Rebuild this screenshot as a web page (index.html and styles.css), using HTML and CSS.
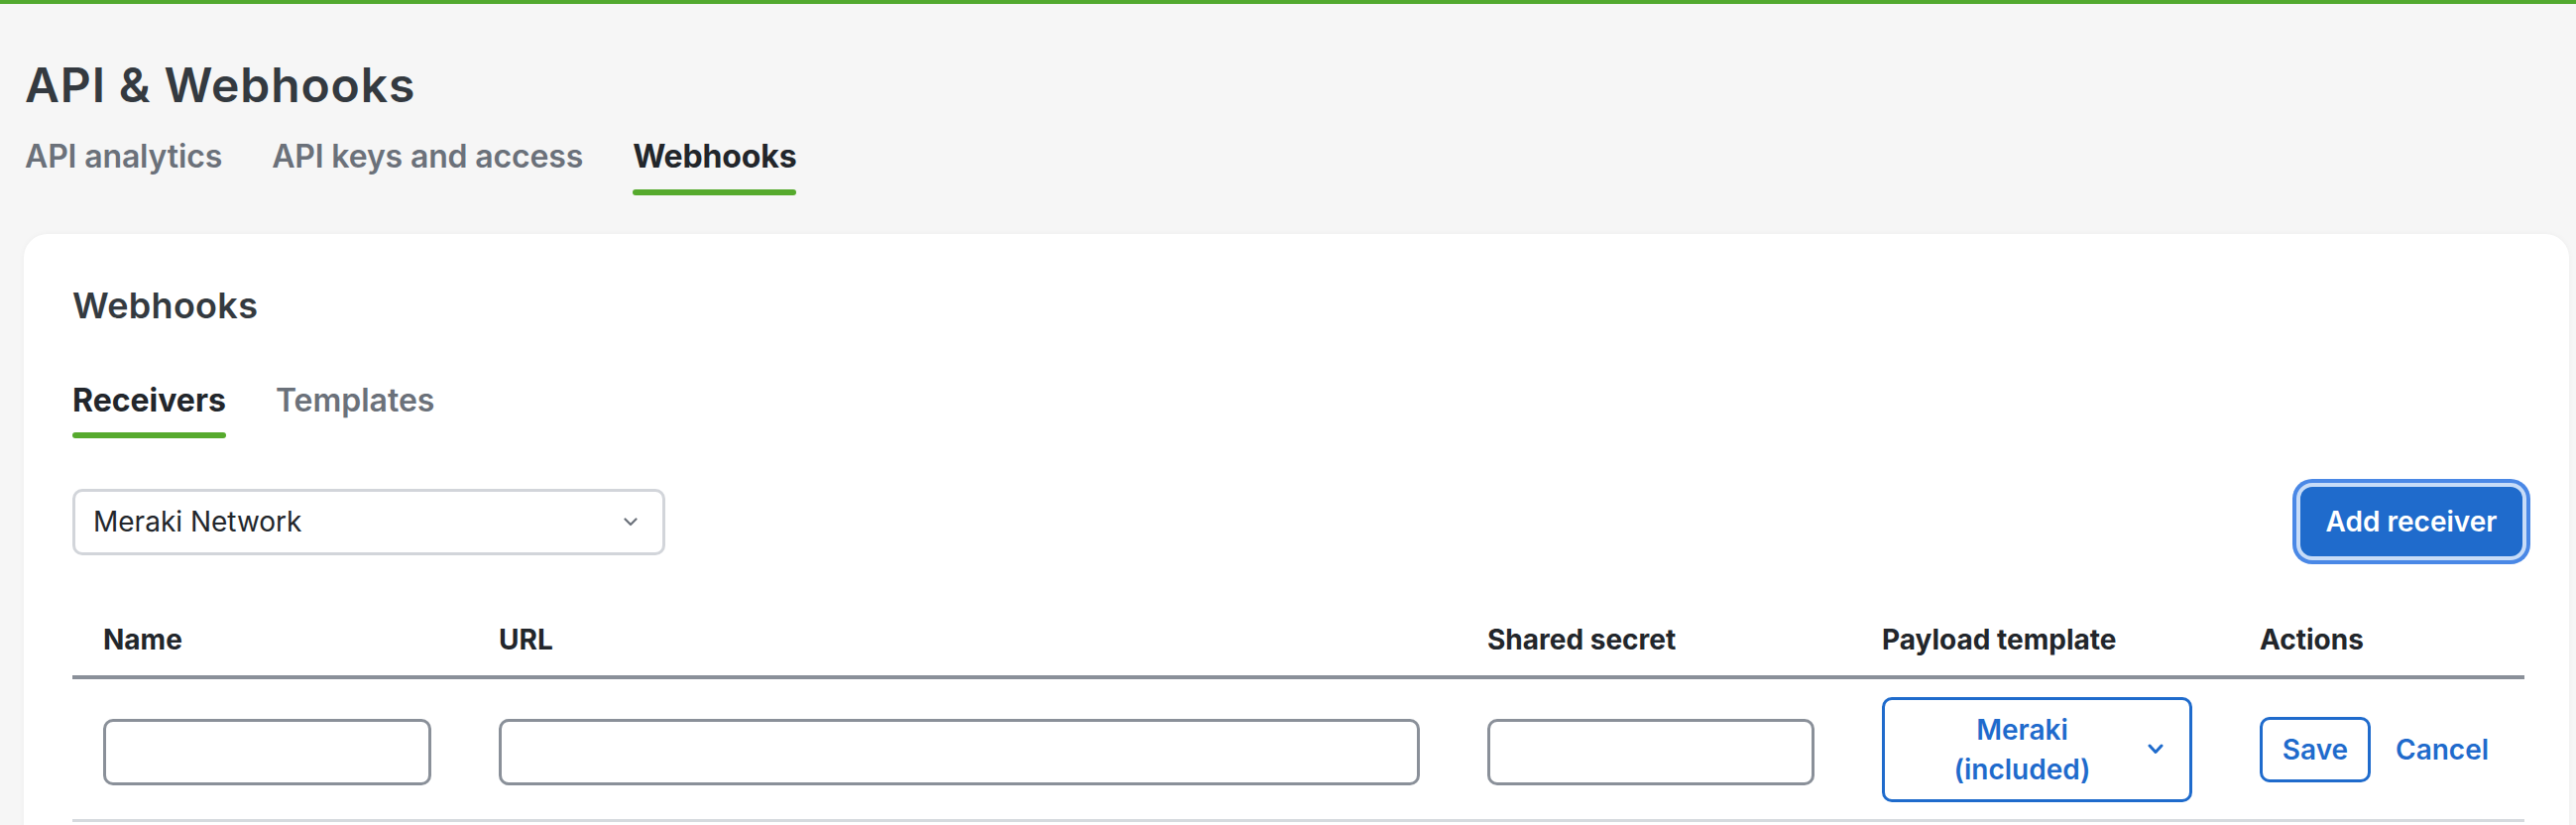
FILE: index.html
```html
<!DOCTYPE html>
<html lang="en">
<head>
<meta charset="utf-8">
<title>API &amp; Webhooks</title>
<link rel="stylesheet" href="styles.css">
</head>
<body>
<div class="topbar"></div>
<main class="page">
  <h1 class="page-title">API &amp; Webhooks</h1>
  <nav class="tabs main-tabs">
    <a class="tab">API analytics</a>
    <a class="tab">API keys and access</a>
    <a class="tab active">Webhooks</a>
  </nav>
  <section class="card">
    <h2 class="card-title">Webhooks</h2>
    <nav class="tabs sub-tabs">
      <a class="tab active">Receivers</a>
      <a class="tab">Templates</a>
    </nav>
    <div class="toolbar">
      <div class="select">
        <span>Meraki Network</span>
        <svg class="chev" width="14" height="9" viewBox="0 0 14 9"><path d="M1.5 1.5 L7 7 L12.5 1.5" fill="none" stroke="#6b717a" stroke-width="2.2" stroke-linecap="round" stroke-linejoin="round"/></svg>
      </div>
      <button class="btn-primary">Add receiver</button>
    </div>
    <div class="table">
      <div class="row head">
        <div class="cell">Name</div>
        <div class="cell">URL</div>
        <div class="cell">Shared secret</div>
        <div class="cell">Payload template</div>
        <div class="cell">Actions</div>
      </div>
      <div class="row body">
        <div class="cell"><div class="input"></div></div>
        <div class="cell"><div class="input"></div></div>
        <div class="cell"><div class="input"></div></div>
        <div class="cell">
          <div class="payload">
            <span class="payload-text">Meraki<br>(included)</span>
            <svg class="chev-blue" width="16" height="11" viewBox="0 0 16 11"><path d="M2 2 L8 8.5 L14 2" fill="none" stroke="#1f6bcc" stroke-width="3" stroke-linecap="round" stroke-linejoin="round"/></svg>
          </div>
        </div>
        <div class="cell actions">
          <button class="btn-outline">Save</button>
          <a class="link">Cancel</a>
        </div>
      </div>
    </div>
  </section>
</main>
</body>
</html>
```

FILE: styles.css
```css
* { box-sizing: border-box; }
html, body { margin: 0; padding: 0; }
body {
  background: #f6f6f6;
  font-family: Inter, "Noto Sans", "Liberation Sans", sans-serif;
  color: #22262b;
  overflow: hidden;
}
.topbar { height: 4px; background: #52a92f; }
.page { padding: 54px 7px 0 24px; }
.page-title {
  margin: 0 0 24px 1px;
  font-size: 48px;
  line-height: 56px;
  font-weight: 600;
  color: #343a40;
  letter-spacing: 0.9px;
}
.tabs { display: flex; gap: 50px; }
.tab {
  display: flex;
  flex-direction: column;
  font-weight: 600;
  color: #6b717a;
  cursor: pointer;
}
.tab::after {
  content: "";
  display: block;
  height: 6px;
  border-radius: 3px;
  background: transparent;
}
.tab.active { color: #22262b; font-weight: 700; }
.tab.active::after { background: #56aa2d; }
.main-tabs { padding-left: 1px; }
.main-tabs .tab { font-size: 32px; line-height: 40px; letter-spacing: -0.15px; }
.main-tabs .tab::after { margin-top: 13px; }
.card {
  margin-top: 39px;
  background: #fff;
  border-radius: 24px 24px 0 0;
  padding: 50px 45px 0 49px;
  box-shadow: 0 0 6px rgba(0,0,0,0.04);
  height: 600px;
}
.card-title {
  margin: 0 0 54px;
  font-size: 36px;
  line-height: 44px;
  font-weight: 600;
  color: #343a40;
  letter-spacing: 0.3px;
}
.sub-tabs .tab { font-size: 32px; line-height: 40px; }
.sub-tabs .tab::after { margin-top: 12px; }
.toolbar {
  margin-top: 49px;
  display: flex;
  justify-content: space-between;
  align-items: center;
}
.select {
  width: 598px;
  height: 67px;
  border: 3px solid #d2d5da;
  border-radius: 10px;
  display: flex;
  align-items: center;
  justify-content: space-between;
  padding: 0 25px 0 18px;
  font-size: 28px;
  color: #22262b;
}
.btn-primary {
  width: 224px;
  height: 70px;
  margin-right: 2px;
  border: none;
  border-radius: 12px;
  background: #1f6bcc;
  color: #fff;
  font-family: inherit;
  font-size: 28px;
  font-weight: 600;
  box-shadow: 0 0 0 4px #c7dcf8, 0 0 0 8px #4a88e6;
}
.table { margin-top: 68px; }
.row {
  display: grid;
  grid-template-columns: 399px 997px 398px 381px 1fr;
}
.row.head { border-bottom: 4px solid #8a9099; }
.row.head .cell {
  font-size: 28px;
  line-height: 32px;
  font-weight: 700;
  padding: 0 0 20px 31px;
  color: #22262b;
}
.row.body {
  height: 144px;
  border-bottom: 3px solid #d6dade;
  align-items: center;
}
.row.body .cell { padding: 0 37px 0 31px; display: flex; align-items: center; }
.input {
  width: 100%;
  height: 67px;
  margin-top: 6px;
  border: 3px solid #8a9099;
  border-radius: 10px;
  background: #fff;
}
.payload {
  width: 313px;
  height: 106px;
  border: 3px solid #1f6bcc;
  border-radius: 10px;
  display: flex;
  align-items: center;
  padding: 0 26px 0 0;
}
.payload-text {
  flex: 1;
  text-align: center;
  font-size: 28px;
  line-height: 40px;
  font-weight: 600;
  color: #1f6bcc;
  padding-left: 12px;
}
.chev-blue { flex: none; }
.actions { gap: 25px; }
.btn-outline {
  width: 112px;
  height: 66px;
  border: 3px solid #1f6bcc;
  border-radius: 10px;
  background: #fff;
  color: #1f6bcc;
  font-family: inherit;
  font-size: 28px;
  font-weight: 600;
}
.link {
  color: #1f6bcc;
  font-size: 28px;
  font-weight: 600;
}
```
